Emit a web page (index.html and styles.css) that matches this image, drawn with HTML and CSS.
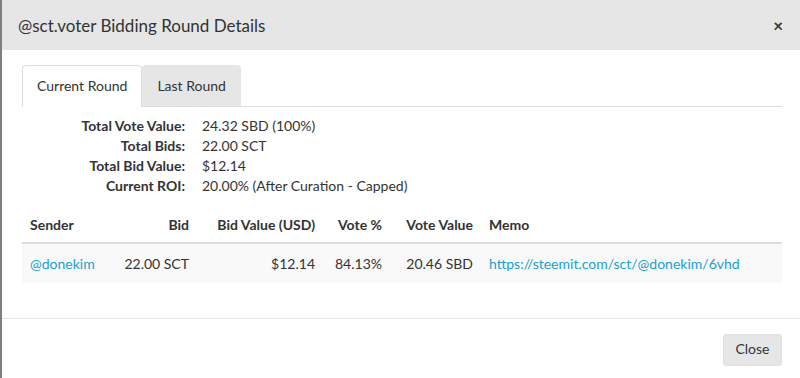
FILE: index.html
```html
<!DOCTYPE html>
<html lang="en">
<head>
    <meta charset="UTF-8">
    <meta name="viewport" content="width=device-width, initial-scale=1.0">
    <title>Bidding Round Details</title>
    <link rel="stylesheet" href="styles.css">
</head>
<body>
    <div class="modal">
        <div class="modal-header">
            <h4 class="modal-title">@sct.voter Bidding Round Details</h4>
            <span class="close">&times;</span>
        </div>
        <div class="modal-body">
            <ul class="tabs">
                <li class="tab active">Current Round</li>
                <li class="tab">Last Round</li>
            </ul>

            <div class="summary">
                <div class="summary-label">Total Vote Value:</div>
                <div>24.32 SBD (100%)</div>
                <div class="summary-label">Total Bids:</div>
                <div>22.00 SCT</div>
                <div class="summary-label">Total Bid Value:</div>
                <div>$12.14</div>
                <div class="summary-label">Current ROI:</div>
                <div>20.00% (After Curation - Capped)</div>
            </div>

            <table class="bids">
                <colgroup>
                    <col style="width: 90px">
                    <col style="width: 85px">
                    <col style="width: 126px">
                    <col style="width: 67px">
                    <col style="width: 91px">
                    <col>
                </colgroup>
                <thead>
                    <tr>
                        <th>Sender</th>
                        <th class="num">Bid</th>
                        <th class="num">Bid Value (USD)</th>
                        <th class="num">Vote %</th>
                        <th class="num">Vote Value</th>
                        <th>Memo</th>
                    </tr>
                </thead>
                <tbody>
                    <tr>
                        <td><a href="#">@donekim</a></td>
                        <td class="num">22.00 SCT</td>
                        <td class="num">$12.14</td>
                        <td class="num">84.13%</td>
                        <td class="num">20.46 SBD</td>
                        <td><a class="memo" href="#" title="https://steemit.com/sct/@donekim/6vhdp">https://steemit.com/sct/@donekim/6vhdp</a></td>
                    </tr>
                </tbody>
            </table>
        </div>
        <div class="modal-footer">
            <button class="btn">Close</button>
        </div>
    </div>
</body>
</html>
```

FILE: styles.css
```css
html, body {
    margin: 0;
    height: 100%;
}
body {
    background: #7f7f7f;
    font-family: Lato, "Open Sans", sans-serif;
    font-size: 14px;
    color: #333;
    overflow: hidden;
}
.modal {
    margin-left: 2px;
    height: 378px;
    background: #fff;
}
.modal-header {
    height: 50px;
    background: #e6e6e6;
    display: flex;
    align-items: center;
    justify-content: space-between;
    padding: 0 17px 0 16px;
}
.modal-title {
    margin: 0;
    font-size: 17px;
    font-weight: normal;
    color: #333;
}
.close {
    font-size: 17px;
    font-weight: bold;
    line-height: 1;
    color: #333;
}
.modal-body {
    padding: 15px 18px 0 20px;
    height: 253px;
}
.tabs {
    list-style: none;
    margin: 0;
    padding: 0;
    display: flex;
    border-bottom: 1px solid #ddd;
}
.tab {
    height: 40px;
    line-height: 40px;
    padding: 0 14px;
    font-size: 14px;
    background: #e6e6e6;
    border-radius: 4px 4px 0 0;
    margin-bottom: -1px;
    border: 1px solid transparent;
    border-bottom-color: #ddd;
}
.tab.active {
    background: #fff;
    border-color: #ddd;
    border-bottom-color: #fff;
}
.summary {
    display: grid;
    grid-template-columns: 163px auto;
    column-gap: 17px;
    line-height: 20px;
    margin-top: 9px;
}
.summary-label {
    text-align: right;
    font-weight: bold;
}
.bids {
    width: 100%;
    table-layout: fixed;
    border-collapse: collapse;
    margin-top: 10px;
}
.bids th, .bids td {
    padding: 0 8px;
    text-align: left;
    white-space: nowrap;
}
.bids th {
    height: 36px;
    font-weight: bold;
    border-bottom: 2px solid #ddd;
}
.bids td {
    height: 39px;
    background: #f9f9f9;
}
.bids .num {
    text-align: right;
}
.bids a {
    color: #1a9fd0;
    text-decoration: none;
}
.bids .memo {
    display: block;
    max-width: 250px;
    overflow: hidden;
}
.modal-footer {
    border-top: 1px solid #e5e5e5;
    padding: 15px 18px 0 0;
    display: flex;
    justify-content: flex-end;
}
.btn {
    font-family: inherit;
    font-size: 14px;
    line-height: 28px;
    padding: 0 0 2px;
    color: #333;
    background: #e6e6e6;
    border: 1px solid #e0e0e0;
    border-radius: 3px;
    width: 59px;
    height: 32px;
}
```
